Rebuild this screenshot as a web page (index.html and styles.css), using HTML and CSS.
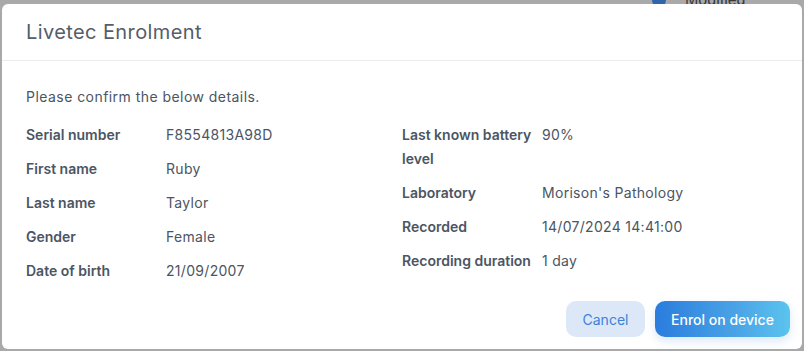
FILE: index.html
```html
<!DOCTYPE html>
<html lang="en">
<head>
    <meta charset="UTF-8">
    <meta name="viewport" content="width=device-width, initial-scale=1.0">
    <title>Livetec Enrolment</title>
    <link rel="stylesheet" href="styles.css">
</head>
<body>

    <!-- Lo que queda detras del overlay -->
    <div class="backdrop">
        <span class="backdrop-icon"></span>
        <span class="backdrop-text">Modified</span>
    </div>

    <div class="dialog">
        <div class="dialog-header">
            <h2>Livetec Enrolment</h2>
        </div>

        <div class="dialog-body">
            <p class="intro">Please confirm the below details.</p>

            <div class="details">
                <dl class="column">
                    <div class="row"><dt>Serial number</dt><dd>F8554813A98D</dd></div>
                    <div class="row"><dt>First name</dt><dd>Ruby</dd></div>
                    <div class="row"><dt>Last name</dt><dd>Taylor</dd></div>
                    <div class="row"><dt>Gender</dt><dd>Female</dd></div>
                    <div class="row"><dt>Date of birth</dt><dd>21/09/2007</dd></div>
                </dl>
                <dl class="column">
                    <div class="row"><dt>Last known battery level</dt><dd>90%</dd></div>
                    <div class="row"><dt>Laboratory</dt><dd>Morison's Pathology</dd></div>
                    <div class="row"><dt>Recorded</dt><dd>14/07/2024 14:41:00</dd></div>
                    <div class="row"><dt>Recording duration</dt><dd>1 day</dd></div>
                </dl>
            </div>
        </div>

        <div class="dialog-footer">
            <button class="btn btn-cancel">Cancel</button>
            <button class="btn btn-primary">Enrol on device</button>
        </div>
    </div>

</body>
</html>
```

FILE: styles.css
```css
/* Fondo gris del overlay */
body {
    font-family: 'Inter', 'Liberation Sans', sans-serif;
    background-color: #a9a9a9;
    margin: 0;
    padding: 4px 2px 0 2px;
    color: #4b5563;
    height: 351px;
    box-sizing: border-box;
    overflow: hidden;
    position: relative;
}

.backdrop {
    position: absolute;
    top: -9px;
    left: 652px;
    display: flex;
    align-items: center;
    gap: 19px;
}

.backdrop-icon {
    width: 14px;
    height: 14px;
    border-radius: 50%;
    background-color: #2f66aa;
}

.backdrop-text {
    font-family: 'Liberation Sans', sans-serif;
    font-size: 16px;
    color: #3a3a3a;
}

/* Caja del dialogo */
.dialog {
    position: relative;
    background-color: #ffffff;
    border-radius: 6px;
    height: 345px;
    display: flex;
    flex-direction: column;
}

.dialog-header {
    height: 56px;
    padding: 0 24px;
    display: flex;
    align-items: center;
    border-bottom: 1px solid #ececec;
}

.dialog-header h2 {
    margin: 0;
    font-size: 20px;
    font-weight: 400;
    letter-spacing: 0.4px;
    color: #545d69;
}

.dialog-body {
    padding: 24px 24px 0 24px;
}

.intro {
    margin: 0 0 14px 0;
    font-size: 14px;
    line-height: 24px;
    letter-spacing: 0.45px;
    color: #4b5563;
}

/* Dos columnas de datos */
.details {
    display: grid;
    grid-template-columns: 1fr 1fr;
}

.column {
    margin: 0;
    display: flex;
    flex-direction: column;
    gap: 10px;
}

.row {
    display: flex;
    font-size: 14px;
    line-height: 24px;
}

.row dt {
    width: 140px;
    flex-shrink: 0;
    font-weight: 600;
    color: #4b5563;
}

.row dd {
    margin: 0;
    color: #4b5563;
    letter-spacing: 0.3px;
}

.dialog-footer {
    margin-top: auto;
    padding: 0 12px 12px 12px;
    display: flex;
    justify-content: flex-end;
    gap: 10px;
}

.btn {
    height: 36px;
    padding: 0 16px;
    font-family: inherit;
    font-size: 14px;
    border: none;
    border-radius: 10px;
    cursor: pointer;
}

.btn-cancel {
    width: 79px;
    background-color: #dce8f8;
    color: #3b82d9;
}

.btn-primary {
    width: 135px;
    background: linear-gradient(90deg, #2a7ddd 0%, #4aa3e6 60%, #5bc4ee 100%);
    color: #ffffff;
    font-weight: 500;
    box-shadow: 0 4px 10px rgba(59, 130, 217, 0.18);
}
```
